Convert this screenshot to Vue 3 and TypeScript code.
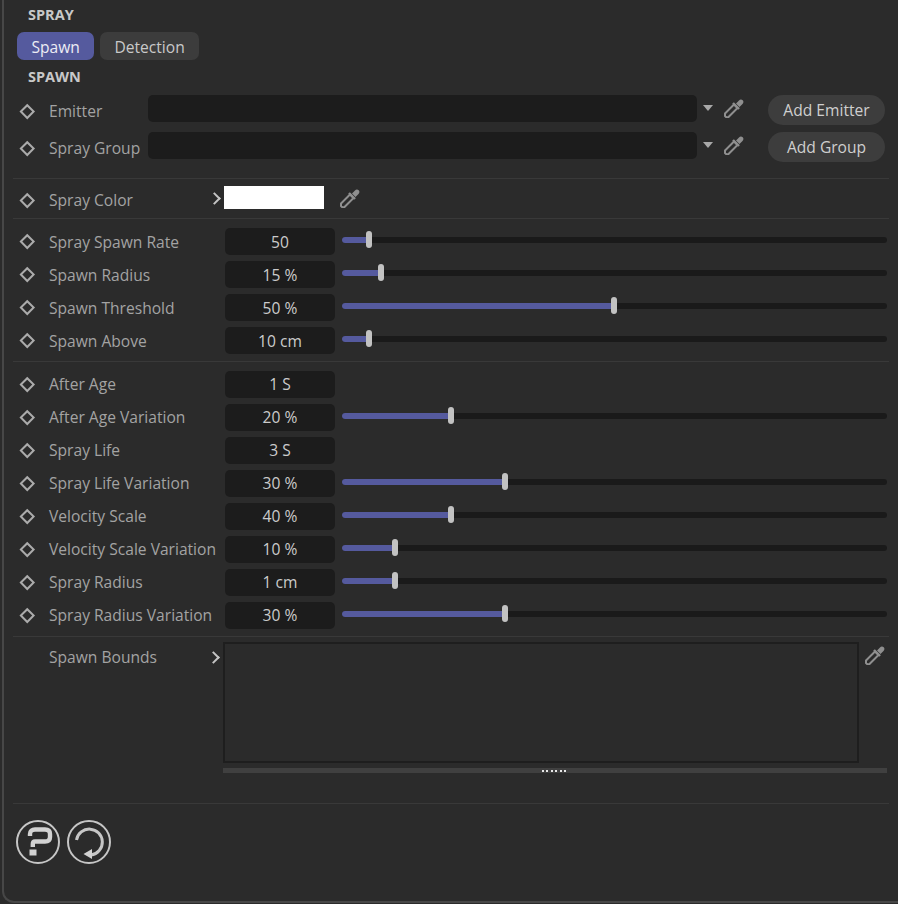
<script setup lang="ts">
interface Row { label: string; value: string; pct?: number }
const rates: Row[] = [
  { label: 'Spray Spawn Rate', value: '50', pct: 5 },
  { label: 'Spawn Radius', value: '15 %', pct: 7.3 },
  { label: 'Spawn Threshold', value: '50 %', pct: 50 },
  { label: 'Spawn Above', value: '10 cm', pct: 5 },
]
const ages: Row[] = [
  { label: 'After Age', value: '1 S' },
  { label: 'After Age Variation', value: '20 %', pct: 20 },
  { label: 'Spray Life', value: '3 S' },
  { label: 'Spray Life Variation', value: '30 %', pct: 30 },
  { label: 'Velocity Scale', value: '40 %', pct: 20 },
  { label: 'Velocity Scale Variation', value: '10 %', pct: 9.9 },
  { label: 'Spray Radius', value: '1 cm', pct: 9.9 },
  { label: 'Spray Radius Variation', value: '30 %', pct: 30 },
]
const groups = [rates, ages]
const links = [
  { label: 'Emitter', action: 'Add Emitter' },
  { label: 'Spray Group', action: 'Add Group' },
]
const body = 'M2.5 19.5L1 18V15.5L10 6.5L13.5 10L4.5 19z'
const neck = 'M9 5L15 11'
const head = 'M12 5.5L15 2.5C16 1.3 17.7 1.3 18.7 2.3C19.7 3.3 19.7 5 18.5 6L15.5 9z'
</script>

<template>
  <div class="panel">
    <div class="heading first">SPRAY</div>
    <div class="tabs">
      <button class="tab active">Spawn</button>
      <button class="tab">Detection</button>
    </div>
    <div class="heading second">SPAWN</div>

    <div class="links">
      <div v-for="l in links" :key="l.label" class="row link">
        <span class="key"></span>
        <span class="label">{{ l.label }}</span>
        <div class="field"></div>
        <span class="caret"></span>
        <svg class="drop" viewBox="0 0 20 20"><path class="body" :d="body" /><path class="neck" :d="neck" /><path class="head" :d="head" /></svg>
        <button class="pill">{{ l.action }}</button>
      </div>
    </div>

    <div class="colour section">
      <div class="row">
        <span class="key"></span>
        <span class="label wide">Spray Color</span>
        <span class="chev"></span>
        <div class="swatch"></div>
        <svg class="drop colour-drop" viewBox="0 0 20 20"><path class="body" :d="body" /><path class="neck" :d="neck" /><path class="head" :d="head" /></svg>
      </div>
    </div>

    <div v-for="(g, i) in groups" :key="i" class="section params" :class="{ lower: i === 0 }">
      <div v-for="r in g" :key="r.label" class="row param">
        <span class="key"></span>
        <span class="label wide">{{ r.label }}</span>
        <div class="num">{{ r.value }}</div>
        <div v-if="r.pct !== undefined" class="slider">
          <div class="fill" :style="{ width: r.pct + '%' }"><i class="thumb"></i></div>
        </div>
      </div>
    </div>

    <div class="section bounds">
      <span class="label bounds-label">Spawn Bounds</span>
      <span class="chev bounds-chev"></span>
      <div class="bounds-main">
        <div class="bounds-top">
          <div class="box"></div>
          <svg class="drop bounds-drop" viewBox="0 0 20 20"><path class="body" :d="body" /><path class="neck" :d="neck" /><path class="head" :d="head" /></svg>
        </div>
        <div class="grip"><span class="dots"><i v-for="n in 6" :key="n"></i></span></div>
      </div>
    </div>

    <div class="section footer">
      <svg class="round" viewBox="0 0 44 44">
        <circle cx="22" cy="22" r="21" />
        <path class="q" d="M14 16V14C14 11 16 9.5 19 9.5H29C32 9.5 34 11 34 14V17C34 20 32 21.5 29 21.5H19C17.5 21.5 16.8 22.5 16.8 24V27" />
        <rect class="dot" x="13.5" y="29.5" width="7" height="6" />
      </svg>
      <svg class="round" viewBox="0 0 44 44">
        <circle cx="22" cy="22" r="21" />
        <path class="arc" d="M9.5 20A13 13 0 1 1 24 35" />
        <path class="arrow" d="M25 29V39L16.5 34z" />
      </svg>
    </div>
  </div>
</template>

<style>
html, body { margin: 0; background: #2b2b2b; }
</style>

<style scoped>
.panel {
  box-sizing: border-box;
  width: 896px;
  height: 903px;
  margin-left: 2px;
  padding: 0 9px;
  background: #2b2b2b;
  border-left: 2px solid #474747;
  border-bottom: 2px solid #474747;
  border-bottom-left-radius: 12px;
  font-family: "Open Sans", "Noto Sans", sans-serif;
  font-size: 15.6px;
  color: #a3a3a3;
  overflow: hidden;
}
.heading {
  font-size: 14.5px;
  font-weight: 700;
  color: #c8c8c8;
  padding-left: 15px;
  line-height: 20px;
}
.first { padding-top: 5px; }
.second { margin-top: 7px; }
.tabs { display: flex; gap: 6px; margin: 7px 0 0 4px; }
.tab {
  height: 28px;
  padding: 2px 14px 0;
  border: 0;
  border-radius: 7px;
  background: #3c3c3c;
  color: #c9c9c9;
  font: inherit;
}
.active { padding: 2px 14.5px 0; background: #555a9e; color: #ececf4; }
.links { display: flex; flex-direction: column; gap: 9px; padding-top: 7px; }
.row { display: flex; align-items: center; height: 28px; padding-left: 8.75px; }
.key {
  box-sizing: border-box;
  flex: none;
  width: 10.5px;
  height: 10.5px;
  border: 2px solid #ababab;
  transform: rotate(45deg);
  margin-right: 16.75px;
}
.label { white-space: nowrap; flex: none; }
.wide { width: 176px; }
.link .label { width: 99px; }
.link .label, .link .key { margin-top: 6px; }
.field { flex: none; width: 549px; height: 27px; border-radius: 5px; background: #1c1c1c; }
.caret {
  flex: none;
  width: 0;
  height: 0;
  margin: 0 11px 0 6px;
  border-left: 5.5px solid transparent;
  border-right: 5.5px solid transparent;
  border-top: 6px solid #a8a8a8;
}
.drop { flex: none; width: 20px; height: 20px; }
.drop .body { fill: none; stroke: #8f8f8f; stroke-width: 2; stroke-linejoin: round; }
.drop .neck { fill: none; stroke: #8f8f8f; stroke-width: 2.4; }
.drop .head { fill: #8f8f8f; }
.pill {
  flex: none;
  width: 117px;
  height: 30px;
  margin: 4px 0 0 24px;
  border: 0;
  border-radius: 15px;
  background: #3d3d3d;
  color: #cfcfcf;
  font: inherit;
}
.section { border-top: 1px solid #393939; }
.colour { margin-top: 19px; padding: 5px 0 6px; }
.colour .wide { width: 161px; }
.colour .key, .colour .label { margin-top: 4px; }
.chev {
  flex: none;
  box-sizing: border-box;
  width: 9px;
  height: 9px;
  border-top: 2px solid #c5c5c5;
  border-right: 2px solid #c5c5c5;
  transform: rotate(45deg);
}
.swatch { flex: none; width: 100px; height: 23px; margin: 0 0 2px 5px; background: #fff; }
.colour-drop { margin: 0 0 1px 16px; }
.params { display: flex; flex-direction: column; gap: 5px; padding: 8px 0 7px; }
.param .num {
  flex: none;
  box-sizing: border-box;
  width: 110px;
  height: 27px;
  border-radius: 5px;
  background: #1c1c1c;
  color: #cbcbcb;
  text-align: center;
  line-height: 27px;
}
.lower .label { margin-top: 2px; }
.lower .param .num { line-height: 29px; }
.slider {
  flex: none;
  width: 545px;
  height: 6px;
  margin: 0 0 2px 7px;
  border-radius: 3px;
  background: #1a1a1a;
}
.fill { position: relative; height: 6px; min-width: 6px; border-radius: 3px; background: #555a9e; }
.thumb {
  position: absolute;
  right: -2.5px;
  top: -6px;
  width: 6px;
  height: 17px;
  border-radius: 3px;
  background: #c2c2c2;
}
.bounds { display: flex; height: 167px; padding-top: 5px; box-sizing: border-box; }
.bounds-label { width: 160px; margin-left: 36px; line-height: 30px; }
.bounds-chev { margin-top: 11px; }
.bounds-main { margin-left: 5px; width: 664px; }
.bounds-top { display: flex; gap: 6px; }
.box {
  box-sizing: border-box;
  flex: none;
  width: 636px;
  height: 121px;
  border: 2px solid #1e1e1e;
}
.bounds-drop { margin-top: 3px; }
.grip {
  display: flex;
  justify-content: center;
  align-items: center;
  height: 5px;
  margin-top: 5px;
  background: #404040;
}
.dots { display: flex; gap: 2.4px; margin-right: 2px; }
.dots i { width: 2px; height: 2px; background: #e8e8e8; }
.footer { display: flex; gap: 7px; padding: 16px 0 0 3px; }
.round { width: 44px; height: 44px; }
.round circle { fill: none; stroke: #c6c6c6; stroke-width: 2; }
.q { fill: none; stroke: #d2d2d2; stroke-width: 4.4; }
.dot { fill: #d2d2d2; }
.arc { fill: none; stroke: #c6c6c6; stroke-width: 3; }
.arrow { fill: #d2d2d2; }
</style>
